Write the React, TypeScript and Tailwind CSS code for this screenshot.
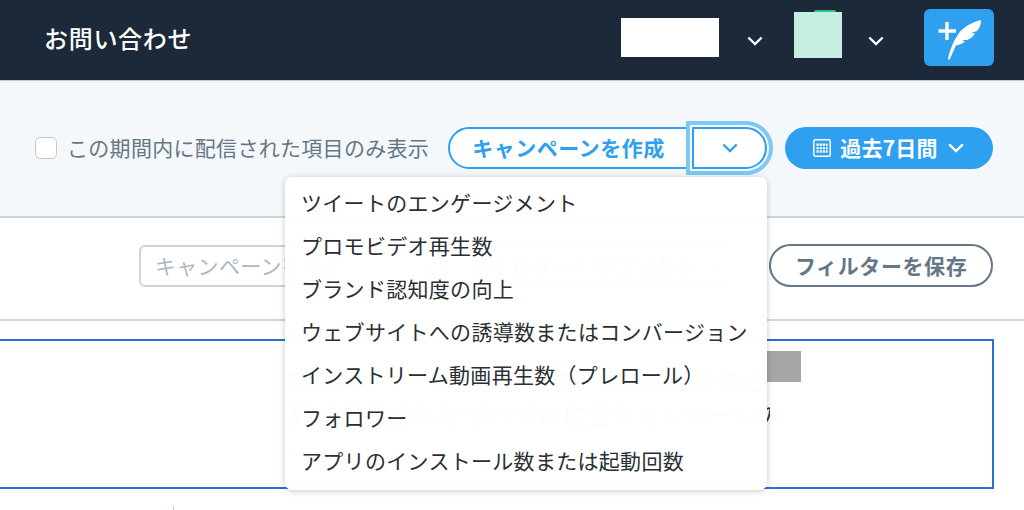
import { ChevronDown } from 'lucide-react';

const MENU_ITEMS = [
  'ツイートのエンゲージメント',
  'プロモビデオ再生数',
  'ブランド認知度の向上',
  'ウェブサイトへの誘導数またはコンバージョン',
  'インストリーム動画再生数（プレロール）',
  'フォロワー',
  'アプリのインストール数または起動回数',
];

function Chevron({ className }: { className?: string }) {
  return (
    <svg viewBox="0 0 18 11" fill="none" stroke="currentColor" strokeWidth={2.6} className={className}>
      <path d="M1.5 1.5 9 9l7.5-7.5" />
    </svg>
  );
}

function Quill() {
  return (
    <svg viewBox="0 0 70 57" className="w-[70px] h-[57px]">
      <path d="M23 13v18M14.5 22h17.5" stroke="#fff" strokeWidth={3.4} fill="none" />
      <path
        d="M24 49.5C26 40 30 31 35 24 40 18 48 13 57 11 57 15 56 19 53 22L47 24 51 24.5C49 28 46 30 43 31L38 31 41 32.5C38 35 35 36 32 36.5 30 41 28 45 26 50 25 51 24 50.5 24 49.5Z"
        fill="#fff"
      />
    </svg>
  );
}

function CalendarIcon() {
  return (
    <svg viewBox="0 0 18 18" className="w-[18px] h-[18px]">
      <rect x="0.75" y="0.75" width="16.5" height="16.5" rx="1.5" fill="none" stroke="#fff" strokeWidth={1.5} />
      <path
        d="M3.5 4.5h2.2v2.4H3.500zM6.600 4.500h2.200v2.400H6.600zM9.700 4.500h2.200v2.400H9.700zM12.800 4.500h1.900v2.400h-1.900zM3.500 7.900h2.200v2.400H3.500zM6.600 7.900h2.200v2.400H6.600zM9.700 7.900h2.200v2.400H9.700zM12.800 7.900h1.900v2.400h-1.900zM3.500 11.300h2.200v2.400H3.500zM6.600 11.300h2.200v2.400H6.600zM9.700 11.300h2.200v2.400H9.700zM12.800 11.300h1.900v2.400h-1.900z"
        fill="#fff"
      />
    </svg>
  );
}

export default function App() {
  return (
    <div className="h-[510px] overflow-hidden bg-white font-['Noto_Sans_CJK_JP',sans-serif]">
      <header className="h-[81px] bg-[#1c2938] border-b border-[#c4c9cd] flex items-center pl-[44px] pr-[30px]">
        <h1 className="text-[24px] tracking-[0.7px] font-medium text-white mr-auto -mt-[4px]">お問い合わせ</h1>
        <div className="w-[98px] h-[39px] bg-white -mt-[5px]" />
        <Chevron className="w-[16px] h-[10px] ml-[28px] mt-[1px] text-white" />
        <div className="relative w-[48px] h-[46px] bg-[#c6eee1] ml-[31px] -mt-[10px]">
          <div className="absolute -top-[2px] left-[20px] w-[22px] h-[2px] rounded-t-full bg-[#2fbf8f]" />
        </div>
        <Chevron className="w-[16px] h-[10px] ml-[26px] mt-[1px] text-white" />
        <button className="w-[70px] h-[57px] bg-[#2f9fef] rounded-[6px] ml-[40px] -mt-[5px]">
          <Quill />
        </button>
      </header>

      <section className="h-[137px] bg-[#f5f8fa] border-b-2 border-[#ccd6dd] flex items-center pl-[35px] pr-[31px] pb-[2px]">
        <span className="w-[22px] h-[22px] bg-white border border-[#c8c8c8] rounded-[5px] mt-[1px]" />
        <span className="ml-[10px] text-[21px] tracking-[0.3px] leading-none text-[#657786]">この期間内に配信された項目のみ表示</span>
        <div className="ml-auto flex items-center">
          <button className="w-[241px] h-[42px] bg-white border-2 border-[#2f9fef] rounded-l-full text-[21px] tracking-[0.5px] font-bold text-[#2f9fef] leading-none">
            キャンペーンを作成
          </button>
          <div className="relative ml-[3px]">
            <button className="w-[75px] h-[42px] bg-white border-2 border-[#2f9fef] rounded-r-full flex items-center justify-center outline-4 outline-offset-[2px] outline-[#7dc8f5] [outline-style:solid]">
              <Chevron className="w-[16px] h-[10px] text-[#2f9fef]" />
            </button>
            <div className="absolute z-10 right-0 top-[50px] w-[482px] pt-[4px] pb-[8px] rounded-[7px] bg-white/[0.985] shadow-[0_1px_6px_rgba(0,0,0,0.22)]">
              {MENU_ITEMS.map((item) => (
                <div key={item} className="h-[43px] pl-[16px] flex items-center text-[21px] tracking-[0.3px] leading-none whitespace-nowrap text-[#292f33]">
                  {item}
                </div>
              ))}
            </div>
          </div>
          <button className="ml-[18px] w-[208px] h-[42px] bg-[#2f9fef] rounded-full flex items-center justify-center gap-[9px] text-white text-[21px] tracking-[0.2px] font-bold leading-none">
            <CalendarIcon />
            <span>過去7日間</span>
            <Chevron className="w-[18px] h-[10px]" />
          </button>
        </div>
      </section>

      <section className="h-[103px] border-b-2 border-[#ccd6dd] flex items-center pl-[139px] pr-[31px] pb-[6px]">
        <div className="w-[290px] h-[42px] border-2 border-[#ccd6dd] rounded-[6px] pl-[14px] flex items-center text-[21px] tracking-[0.3px] leading-none text-[#aab8c2] whitespace-nowrap">
          キャンペーンを検索
        </div>
        <div className="ml-[13px] w-[310px] h-[43px] border-2 border-[#ccd6dd] rounded-full flex items-center justify-center gap-[8px] text-[21px] font-bold leading-none text-[#657786]">
          <span>フィルター：デフォルト</span>
          <ChevronDown className="w-[18px] h-[18px]" />
        </div>
        <button className="ml-[18px] w-[224px] h-[43px] border-2 border-[#657786] rounded-full text-[21px] tracking-[0.6px] font-bold leading-none text-[#657786]">
          フィルターを保存
        </button>
      </section>

      <div className="relative -ml-[2px] mr-[30px] mt-[18px] h-[150px] border-2 border-[#2b6fd6] pl-[288px] pt-[22px] overflow-hidden text-[#292f33] text-[23px] leading-[34px] whitespace-nowrap">
        <p className="w-[482px] overflow-hidden tracking-[1px]">在のストリームおよび広告、認定を受ける必</p>
        <p className="w-[482px] pl-[2px] overflow-hidden tracking-[1.5px]">界で実施された すべての広告キャンペーンの</p>
        <div className="absolute left-[767px] top-[10px] w-[34px] h-[31px] bg-[#a6a6a6]" />
      </div>
      <div className="ml-[173px] mt-[17px] w-px h-[4px] bg-[#ccd6dd]" />
    </div>
  );
}
